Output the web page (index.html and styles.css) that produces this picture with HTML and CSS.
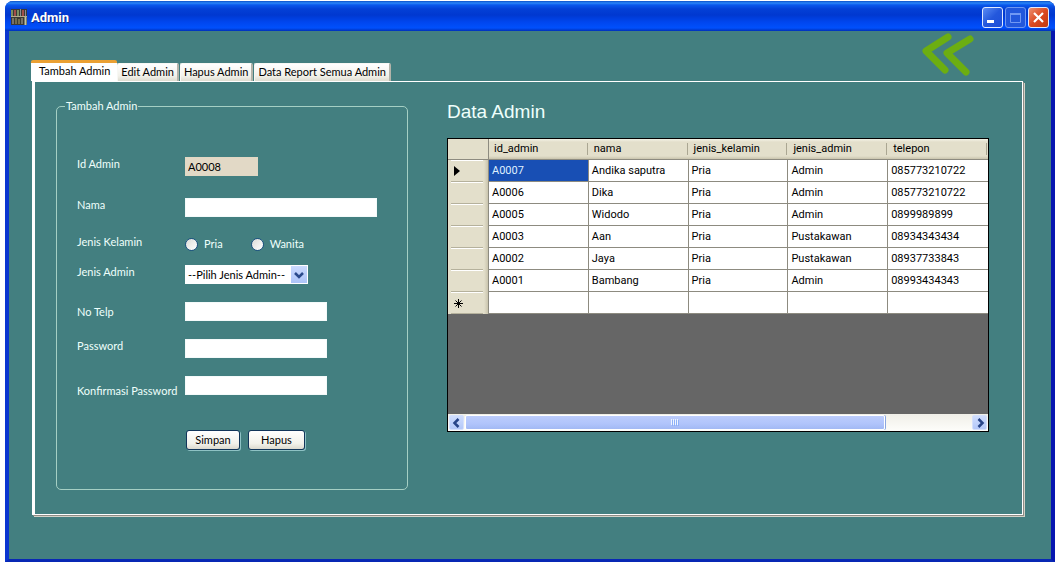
FILE: index.html
```html
<!DOCTYPE html>
<html lang="id">
<head>
<meta charset="utf-8">
<title>Admin</title>
<link rel="stylesheet" href="styles.css">
</head>
<body>
<div class="window">
  <header class="titlebar">
    <svg class="app-icon" width="16" height="16" viewBox="0 0 16 16" aria-hidden="true">
      <rect width="16" height="16" fill="#3b3a35"/>
      <path d="M1 1v6M7 1v6" stroke="#7b8f63" stroke-width="2"/>
      <path d="M4 1v6M12 1v6" stroke="#a1504a" stroke-width="2"/>
      <path d="M9.500 0v7M14.500 1v6" stroke="#8b8c95"/>
      <path d="M0 7.500h16" stroke="#b5ad8e"/>
      <path d="M2 9v6M11 9v6" stroke="#77736a" stroke-width="2"/>
      <path d="M5 9v6M8 10v5" stroke="#aaa06a" stroke-width="1"/>
      <path d="M14.500 8v8" stroke="#c0c3a3" stroke-width="2"/>
    </svg>
    <h1 class="title">Admin</h1>
    <div class="window-buttons">
      <button class="win-btn" type="button" aria-label="Minimize"><svg width="19" height="19" viewBox="0 0 19 19"><path d="M4 12h7v3H4z" fill="#fff"/></svg></button>
      <button class="win-btn disabled" type="button" aria-label="Maximize" disabled><svg width="19" height="19" viewBox="0 0 19 19"><path d="M4.500 5v9.500h10V5M4 5.500h11" fill="none" stroke="#7098f4"/><path d="M4 5h11v2H4z" fill="#7098f4"/></svg></button>
      <button class="win-btn close" type="button" aria-label="Close"><svg width="19" height="19" viewBox="0 0 19 19"><path d="M5 5l9 9M14 5l-9 9" stroke="#fff" stroke-width="2.200"/></svg></button>
    </div>
  </header>

  <main class="client">
    <div class="toolbar">
      <div class="tabs" role="tablist">
        <button class="tab active" type="button" role="tab" aria-selected="true">Tambah Admin</button>
        <button class="tab" type="button" role="tab">Edit Admin</button>
        <button class="tab" type="button" role="tab">Hapus Admin</button>
        <button class="tab" type="button" role="tab">Data Report Semua Admin</button>
      </div>
      <button class="back" type="button" aria-label="Kembali">
        <svg width="54" height="44" viewBox="0 0 54 44"><path d="M27 5L5 19L24 38M49 7L26 21L45 40" fill="none" stroke="#6cae11" stroke-width="7" stroke-linecap="round" stroke-linejoin="round"/></svg>
      </button>
    </div>

    <section class="panel" role="tabpanel">
      <fieldset class="form">
        <legend>Tambah Admin</legend>
        <div class="field gap-l"><label for="id">Id Admin</label><input class="text short" id="id" type="text" value="A0008" readonly></div>
        <div class="field gap-m"><label for="nama">Nama</label><input class="text long" id="nama" type="text"></div>
        <div class="field gap-s"><span class="label" id="jk">Jenis Kelamin</span>
          <div class="radios" role="radiogroup" aria-labelledby="jk">
            <label class="radio"><input type="radio" name="jk">Pria</label>
            <label class="radio"><input type="radio" name="jk">Wanita</label>
          </div>
        </div>
        <div class="field gap-m"><label for="jenis">Jenis Admin</label>
          <div class="combo">
            <select id="jenis"><option>--Pilih Jenis Admin--</option><option>Admin</option><option>Pustakawan</option></select>
            <svg class="arrow" width="16" height="17" viewBox="0 0 16 17" aria-hidden="true"><path d="M4 7l4 4l4-4" fill="none" stroke="#2b4a8c" stroke-width="2.500"/></svg>
          </div>
        </div>
        <div class="field gap-m middle"><label for="telp">No Telp</label><input class="text" id="telp" type="text"></div>
        <div class="field gap-m"><label for="pw">Password</label><input class="text" id="pw" type="password"></div>
        <div class="field low"><label for="pw2">Konfirmasi Password</label><input class="text" id="pw2" type="password"></div>
        <div class="actions">
          <button class="btn" type="button">Simpan</button>
          <button class="btn wide" type="button">Hapus</button>
        </div>
      </fieldset>

      <section class="data">
        <h2>Data Admin</h2>
        <div class="grid">
          <table>
            <thead><tr><th class="row-head"></th><th>id_admin</th><th>nama</th><th>jenis_kelamin</th><th>jenis_admin</th><th>telepon</th></tr></thead>
            <tbody>
              <tr><th class="row-head"><svg width="6" height="10" viewBox="0 0 6 10"><path d="M0 0l6 5l-6 5z"/></svg></th><td class="selected">A0007</td><td>Andika saputra</td><td>Pria</td><td>Admin</td><td>085773210722</td></tr>
              <tr><th class="row-head"></th><td>A0006</td><td>Dika</td><td>Pria</td><td>Admin</td><td>085773210722</td></tr>
              <tr><th class="row-head"></th><td>A0005</td><td>Widodo</td><td>Pria</td><td>Admin</td><td>0899989899</td></tr>
              <tr><th class="row-head"></th><td>A0003</td><td>Aan</td><td>Pria</td><td>Pustakawan</td><td>08934343434</td></tr>
              <tr><th class="row-head"></th><td>A0002</td><td>Jaya</td><td>Pria</td><td>Pustakawan</td><td>08937733843</td></tr>
              <tr><th class="row-head"></th><td>A0001</td><td>Bambang</td><td>Pria</td><td>Admin</td><td>08993434343</td></tr>
              <tr><th class="row-head"><svg width="9" height="9" viewBox="0 0 9 9"><path d="M4.500 0v9M0 4.500h9M1.500 1.500l6 6M7.500 1.500l-6 6" stroke="#000"/></svg></th><td></td><td></td><td></td><td></td><td></td></tr>
            </tbody>
          </table>
          <div class="scrollbar">
            <button class="scroll-btn" type="button" aria-label="Gulir kiri"><svg width="14" height="14" viewBox="0 0 14 14"><path d="M8.500 3l-4 4l4 4" fill="none" stroke="#274488" stroke-width="2.500"/></svg></button>
            <div class="track"><div class="thumb"><svg width="8" height="7" viewBox="0 0 8 7"><path d="M.5 0v6M2.500 0v6M4.500 0v6M6.500 0v6" stroke="#eef4fe"/><path d="M1.500 1v6M3.500 1v6M5.500 1v6M7.500 1v6" stroke="#8cb0f8"/></svg></div></div>
            <button class="scroll-btn" type="button" aria-label="Gulir kanan"><svg width="14" height="14" viewBox="0 0 14 14"><path d="M5.500 3l4 4l-4 4" fill="none" stroke="#274488" stroke-width="2.500"/></svg></button>
          </div>
        </div>
      </section>
    </section>
  </main>
</div>
</body>
</html>
```
FILE: styles.css
```css
* { box-sizing: border-box; }

body {
  margin: 0;
  padding: 1px 0 0 5px;
  background: #fff;
  color: #000;
  font: 11px/14px Lato, "Liberation Sans", sans-serif;
}

button, input, select { font: inherit; color: inherit; }
button { padding: 0; border: 0; background: none; }
svg { display: block; }

.window {
  display: flex;
  flex-direction: column;
  min-height: calc(100vh - 1px);
  border: solid;
  border-width: 0 4px 3px;
  border-color: #0a2fc8 #0616b0 #0828b4 #0a35d0;
  border-radius: 8px 8px 0 0;
  background: #437f80;
}

/* Title bar */
.titlebar {
  display: flex;
  align-items: center;
  gap: 4px;
  height: 30px;
  margin: 0 -4px;
  padding: 2px 6px 0;
  border-radius: 8px 8px 0 0;
  background: linear-gradient(#0a4fc8 0, #2a86f8 2px, #0a58ec 4px, #0340d6 8px, #0038d0 14px, #0046ee 21px, #0050fc 27px, #0030b8 30px);
}
.title {
  margin: 0;
  padding-top: 2px;
  color: #fff;
  font: bold 13px/16px Roboto, sans-serif;
  text-shadow: 1px 1px #0a2a90;
}
.window-buttons { display: flex; gap: 2px; margin-left: auto; }
.win-btn {
  width: 21px;
  height: 21px;
  border: 1px solid #dfeaff;
  border-radius: 3px;
  background: linear-gradient(135deg, #5a8cf4, #2458dc 50%, #1c4ed8);
}
.win-btn.disabled { border-color: #6f97f0; background: #2257dc; }
.win-btn.close { background: linear-gradient(135deg, #ec8f70, #dc4a22 50%, #c23a10); }

/* Client area */
.client { flex: 1; padding: 0 28px 43px 22px; }
.toolbar { display: flex; justify-content: space-between; }
.tabs { display: flex; align-items: flex-end; height: 50px; }
.tab {
  height: 18px;
  margin-right: 1px;
  padding: 0 3px 1px;
  border: 1px solid #f8f8f4;
  border-right: 2px solid #b4b4aa;
  border-bottom: 0;
  border-radius: 2px 2px 0 0;
  background: linear-gradient(#fff, #f2f1ea 70%, #dedcd0);
  white-space: nowrap;
}
.tab.active {
  height: 21px;
  margin: 0;
  padding: 0 7px 3px 8px;
  border: 0;
  border-top: 3px solid #eaa033;
  background: #fff;
}
.back { margin: 1px 48px 0 0; align-self: flex-start; }

.panel {
  display: flex;
  align-items: flex-start;
  gap: 39px;
  padding: 17px 33px 24px 21px;
  margin-left: 1px;
  border: 1px solid #fff;
  border-left-width: 3px;
  box-shadow: 1px 1px #8d8d86, 2px 2px #d2d0c6;
}

/* Form */
.form {
  flex: 0 0 352px;
  margin: 0;
  padding: 44px 20px 39px;
  border: 1px solid #a5cfc4;
  border-radius: 5px;
}
.form legend { margin-left: -12px; padding: 0 1px; color: #effffc; }
.field { display: flex; align-items: flex-start; }
.field > label, .field > .label { flex: 0 0 108px; color: #effffc; }
.gap-s { margin-bottom: 12px; }
.gap-m { margin-bottom: 18px; }
.gap-l { margin-bottom: 22px; }
.middle { align-items: center; }
.low { align-items: flex-start; }
.field.low > label { padding-top: 8px; }
.text {
  width: 142px;
  height: 19px;
  padding: 0 2px;
  border: 1px solid #f4fafa;
  background: #fff;
}
.text.short { width: 73px; border-color: #e2d8c4; background: #e2d9c6; }
.text.long { width: 192px; }

.radios { display: flex; gap: 28px; height: 18px; align-items: center; }
.radio { display: flex; align-items: center; gap: 6px; color: #effffc; }
.radio input {
  appearance: none;
  width: 13px;
  height: 13px;
  margin: 0;
  border: 1px solid #1c5180;
  border-radius: 50%;
  background: linear-gradient(135deg, #dcdcd7, #fff);
}

.combo { position: relative; }
.combo select {
  appearance: none;
  display: block;
  width: 123px;
  height: 19px;
  padding: 0 18px 0 3px;
  border: 0;
  border-radius: 0;
  background: #fff;
}
.arrow {
  position: absolute;
  top: 1px;
  right: 1px;
  background: linear-gradient(#cbdafe, #adc4f8);
  pointer-events: none;
}

.actions { display: flex; gap: 8px; margin: 32px 0 0 109px; }
.btn {
  width: 54px;
  height: 20px;
  border: 1px solid #12355a;
  border-radius: 3px;
  background: linear-gradient(#fff, #f2f1ea 70%, #dcd9ce);
  box-shadow: 1px 1px #8ec2c4;
}
.btn.wide { width: 57px; }

/* Data grid */
.data { flex: 1; min-width: 0; }
.data h2 {
  margin: 2px 0 15px;
  color: #effffc;
  font: 19px/22px "Liberation Sans", Arial, sans-serif;
}
.grid {
  display: flex;
  flex-direction: column;
  justify-content: space-between;
  min-height: 294px;
  border: 1px solid #000;
  background: #666;
}
.grid table {
  width: 100%;
  table-layout: fixed;
  border-collapse: separate;
  border-spacing: 0;
  font-family: Roboto, "Liberation Sans", sans-serif;
}
.grid th, .grid td {
  height: 22px;
  padding: 0 3px;
  text-align: left;
  font-weight: normal;
}
.grid td {
  border: solid #8d8b80;
  border-width: 0 1px 1px 0;
  background: #fff;
}
.grid td:last-child { border-right: 0; }
.grid td.selected { background: #184fb4; color: #dff0ff; }
.grid thead th {
  height: 21px;
  padding-left: 5px;
  border-bottom: 1px solid #8d8b80;
  background:
    linear-gradient(#aaa692, #aaa692) right 1px center / 1px 12px no-repeat,
    linear-gradient(#f4f2e6 0, #e3dfcb 3px, #e3dfcb 17px, #c9c4ad);
}
.grid .row-head {
  width: 41px;
  padding-left: 6px;
  border-right: 1px solid #8d8b80;
}
.grid thead .row-head { background: #e3dfcb; }
.grid tbody .row-head {
  background:
    linear-gradient(#b5b19c, #b5b19c) 3px 100% / 32px 1px no-repeat,
    linear-gradient(#fff, #fff) 3px 0 / 32px 1px no-repeat,
    linear-gradient(to right, #e3dfcb 36px, #c9c4ad);
}

.scrollbar {
  display: flex;
  gap: 1px;
  height: 17px;
  padding: 1px;
  background: linear-gradient(#f0efe8, #fdfdfa);
}
.scroll-btn {
  width: 15px;
  height: 15px;
  border: 1px solid #d5e0fc;
  border-radius: 2px;
  background: linear-gradient(#cfddfe, #b4c8f8);
}
.track { flex: 1; }
.thumb {
  display: flex;
  align-items: center;
  justify-content: center;
  width: 83%;
  height: 15px;
  border: 1px solid #fff;
  border-radius: 2px;
  background: linear-gradient(#bccdfd, #b0c4fb 60%, #a2b9f4);
  box-shadow: 1px 0 #8aa6e0;
}
```
